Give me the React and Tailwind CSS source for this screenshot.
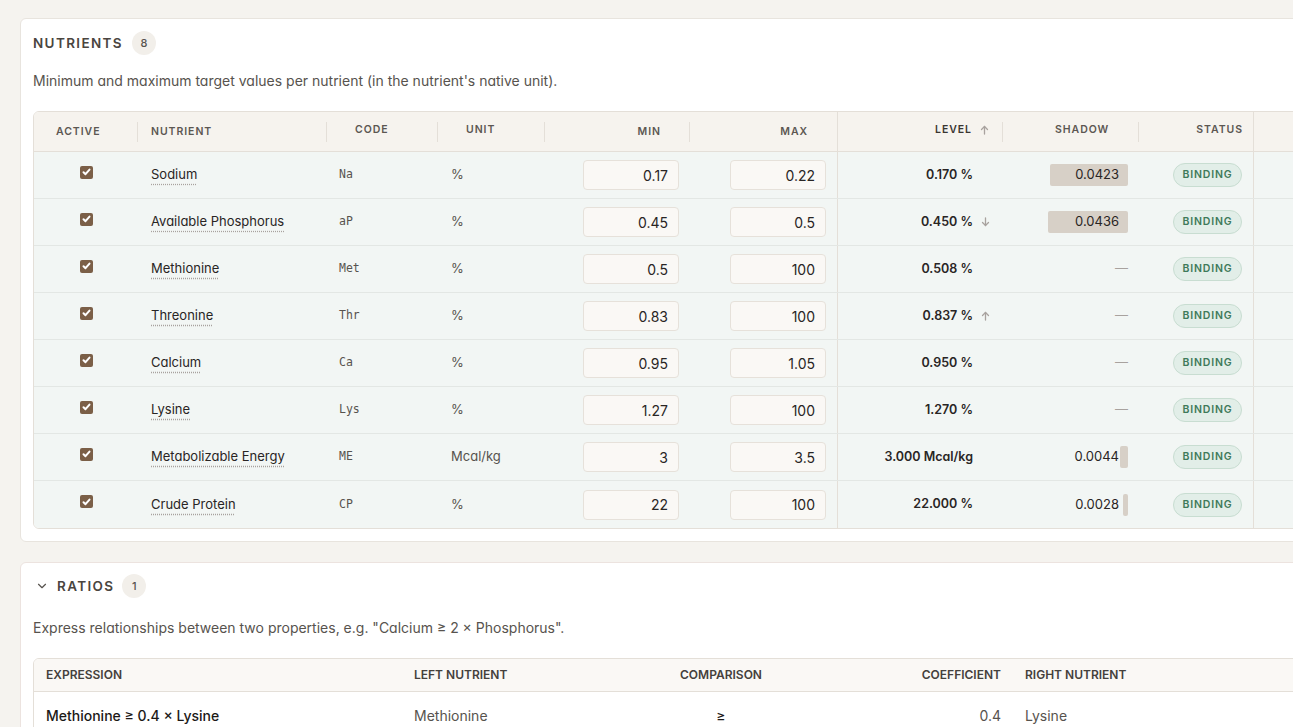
import React from "react";
import { ChevronDown } from "lucide-react";

const rows = [
  { name: "Sodium", code: "Na", unit: "%", min: "0.17", max: "0.22", level: "0.170 %", arrow: null, shadow: 0.0423 },
  { name: "Available Phosphorus", code: "aP", unit: "%", min: "0.45", max: "0.5", level: "0.450 %", arrow: "down", shadow: 0.0436 },
  { name: "Methionine", code: "Met", unit: "%", min: "0.5", max: "100", level: "0.508 %", arrow: null, shadow: 0 },
  { name: "Threonine", code: "Thr", unit: "%", min: "0.83", max: "100", level: "0.837 %", arrow: "up", shadow: 0 },
  { name: "Calcium", code: "Ca", unit: "%", min: "0.95", max: "1.05", level: "0.950 %", arrow: null, shadow: 0 },
  { name: "Lysine", code: "Lys", unit: "%", min: "1.27", max: "100", level: "1.270 %", arrow: null, shadow: 0 },
  { name: "Metabolizable Energy", code: "ME", unit: "Mcal/kg", min: "3", max: "3.5", level: "3.000 Mcal/kg", arrow: null, shadow: 0.0044 },
  { name: "Crude Protein", code: "CP", unit: "%", min: "22", max: "100", level: "22.000 %", arrow: null, shadow: 0.0028 },
];

const GRID = "grid grid-cols-[104px_189px_111px_107px_145px_148px_165px_136px_115px_140px]";

function Arrow({ dir }) {
  return (
    <svg width="9" height="10" viewBox="0 0 9 10" fill="none" stroke="#a8a29e" strokeWidth="1.3" strokeLinecap="round" strokeLinejoin="round">
      {dir === "up" ? (
        <>
          <path d="M4.5 9V1.5" />
          <path d="M1.5 4.5L4.5 1.5L7.5 4.5" />
        </>
      ) : (
        <>
          <path d="M4.5 1V8.5" />
          <path d="M1.5 5.5L4.5 8.5L7.5 5.5" />
        </>
      )}
    </svg>
  );
}

function Sep() {
  return <div className="w-px h-[20px] bg-[#e4dfd8] shrink-0" />;
}

function Check() {
  return (
    <div className="w-[13px] h-[13px] rounded-[2px] bg-[#7b5f47] flex items-center justify-center mb-[6px]">
      <svg width="9" height="8" viewBox="0 0 9 8" fill="none" stroke="white" strokeWidth="2" strokeLinecap="round" strokeLinejoin="round">
        <path d="M1.5 4.2L3.5 6.2L7.5 1.6" />
      </svg>
    </div>
  );
}

function Input({ value }) {
  return (
    <div className="w-[96px] h-[30px] rounded-[4px] border border-[#e6e1da] bg-[#faf8f5] flex items-center justify-end pr-[10px] text-[14px] text-[#292524]">
      {value}
    </div>
  );
}

const hdr = "text-[10.5px] font-semibold tracking-[0.09em] text-[#5c5752] uppercase";

export default function App() {
  return (
    <div className="w-full min-h-[727px] bg-[#f5f3ef] overflow-hidden font-['Inter','Liberation_Sans',sans-serif] [font-feature-settings:'cv11'] text-[#292524]">
      <div className="pl-[20px] pt-[18px] w-[1500px] flex flex-col gap-[20px]">
        {/* Nutrients card */}
        <section className="bg-white border border-[#e8e4de] rounded-[6px] px-[12px] pt-[12px] pb-[12px]">
          <div className="flex items-center gap-[9px] h-[24px]">
            <h2 className="text-[13.5px] font-semibold tracking-[0.1em] text-[#4a4540]">NUTRIENTS</h2>
            <span className="w-[24px] h-[24px] rounded-full bg-[#f2efea] flex items-center justify-center text-[11px] font-medium text-[#57534e]">8</span>
          </div>
          <p className="mt-[16px] text-[14px] leading-[20px] text-[#57534e]">
            Minimum and maximum target values per nutrient (in the nutrient's native unit).
          </p>
          <div className="mt-[20px] border border-[#e4dfd8] rounded-[6px] overflow-hidden w-max">
            {/* header */}
            <div className={`${GRID} h-[40px] bg-[#f6f3ee] border-b border-[#e4dfd8]`}>
              <div className="flex items-center">
                <div className={`flex-1 pl-[22px] ${hdr}`}>Active</div>
                <Sep />
              </div>
              <div className="flex items-center">
                <div className={`flex-1 pl-[13px] ${hdr}`}>Nutrient</div>
                <Sep />
              </div>
              <div className="flex items-center">
                <div className={`flex-1 pl-[28px] pb-[4px] ${hdr}`}>Code</div>
                <Sep />
              </div>
              <div className="flex items-center">
                <div className={`flex-1 pl-[28px] pb-[4px] ${hdr}`}>Unit</div>
                <Sep />
              </div>
              <div className="flex items-center">
                <div className={`flex-1 text-right pr-[28px] ${hdr}`}>Min</div>
                <Sep />
              </div>
              <div className="flex items-center border-r border-[#e4dfd8]">
                <div className={`flex-1 text-right pr-[29px] ${hdr}`}>Max</div>
              </div>
              <div className="flex items-center">
                <div className="flex-1 flex items-center justify-end pr-[13px] pb-[4px]">
                  <span className={`${hdr} !text-[#3a3632]`}>Level</span>
                  <span className="ml-[8px] w-[9px] flex"><Arrow dir="up" /></span>
                </div>
                <Sep />
              </div>
              <div className="flex items-center">
                <div className={`flex-1 pl-[52px] pb-[4px] ${hdr}`}>Shadow</div>
                <Sep />
              </div>
              <div className="flex items-center border-r border-[#e4dfd8]">
                <div className={`flex-1 text-right pr-[10px] pb-[4px] ${hdr}`}>Status</div>
              </div>
              <div />
            </div>
            {/* rows */}
            {rows.map((r, i) => (
              <div key={r.name} className={`${GRID} h-[47px] bg-[#f2f6f4] ${i < rows.length - 1 ? "border-b border-[#e3e7e4]" : ""}`}>
                <div className="flex items-center justify-center">
                  <Check />
                </div>
                <div className="flex items-center pl-[13px]">
                  <span className="text-[13px] text-[#292524] underline decoration-dotted decoration-[#a8a29e] underline-offset-[5px]">{r.name}</span>
                </div>
                <div className="flex items-center pl-[12px] font-['DejaVu_Sans_Mono','Liberation_Mono',monospace] text-[11.5px] text-[#57534e]">{r.code}</div>
                <div className="flex items-center pl-[13px] text-[13px] text-[#57534e]">{r.unit}</div>
                <div className="flex items-center justify-end pr-[11px]">
                  <Input value={r.min} />
                </div>
                <div className="flex items-center justify-end pr-[11px] border-r border-[#e4dfd8]">
                  <Input value={r.max} />
                </div>
                <div className="flex items-center justify-end pr-[13px]">
                  <span className="text-[12.5px] font-semibold text-[#292524]">{r.level}</span>
                  <span className="ml-[8px] w-[9px] flex">{r.arrow && <Arrow dir={r.arrow} />}</span>
                </div>
                <div className="flex items-center justify-end pr-[11px]">
                  {r.shadow > 0 ? (
                    <div className="relative h-[22px] flex items-center justify-end pr-[9px]">
                      <div
                        className="absolute right-0 top-0 h-[22px] rounded-[2px] bg-[#d7d0c7]"
                        style={{ width: `${Math.round((r.shadow / 0.0436) * 80)}px` }}
                      />
                      <span className="relative text-[13px] text-[#292524]">{r.shadow.toFixed(4)}</span>
                    </div>
                  ) : (
                    <span className="text-[13px] text-[#a8a29e]">—</span>
                  )}
                </div>
                <div className="flex items-center justify-end pr-[11px] border-r border-[#e4dfd8]">
                  <span className="h-[24px] w-[69px] rounded-full bg-[#e2eee8] border border-[#c8ddd1] flex items-center justify-center text-[10.5px] font-semibold tracking-[0.08em] text-[#3f7a5a]">
                    BINDING
                  </span>
                </div>
                <div />
              </div>
            ))}
          </div>
        </section>

        {/* Ratios card */}
        <section className="bg-white border border-[#ece3df] rounded-[6px] px-[12px] pt-[11px] pb-[12px]">
          <div className="flex items-center h-[24px]">
            <ChevronDown size={14} strokeWidth={2} className="text-[#57534e] ml-[2px]" />
            <h2 className="ml-[8px] text-[13.5px] font-semibold tracking-[0.1em] text-[#4a4540]">RATIOS</h2>
            <span className="ml-[8px] w-[24px] h-[24px] rounded-full bg-[#f2efea] flex items-center justify-center text-[11px] font-medium text-[#57534e]">1</span>
          </div>
          <p className="mt-[20px] text-[14px] leading-[20px] text-[#57534e]">
            Express relationships between two properties, e.g. "Calcium ≥ 2 × Phosphorus".
          </p>
          <div className="mt-[20px] border border-[#e4dfd8] rounded-[6px] overflow-hidden">
            <div className="grid grid-cols-[368px_238px_162px_211px_1fr] h-[33px] bg-[#faf8f5] border-b border-[#e4dfd8] items-center text-[12px] font-semibold text-[#44403c]">
              <div className="pl-[12px]">EXPRESSION</div>
              <div className="pl-[12px]">LEFT NUTRIENT</div>
              <div className="text-center">COMPARISON</div>
              <div className="text-right pr-[12px]">COEFFICIENT</div>
              <div className="pl-[12px]">RIGHT NUTRIENT</div>
            </div>
            <div className="grid grid-cols-[368px_238px_162px_211px_1fr] h-[46px] items-center text-[14px]">
              <div className="pl-[12px] font-medium text-[#1c1917]">Methionine ≥ 0.4 × Lysine</div>
              <div className="pl-[12px] text-[#57534e]">Methionine</div>
              <div className="text-center text-[#1c1917]">≥</div>
              <div className="text-right pr-[12px] text-[#57534e]">0.4</div>
              <div className="pl-[12px] text-[#57534e]">Lysine</div>
            </div>
          </div>
        </section>
      </div>
    </div>
  );
}
